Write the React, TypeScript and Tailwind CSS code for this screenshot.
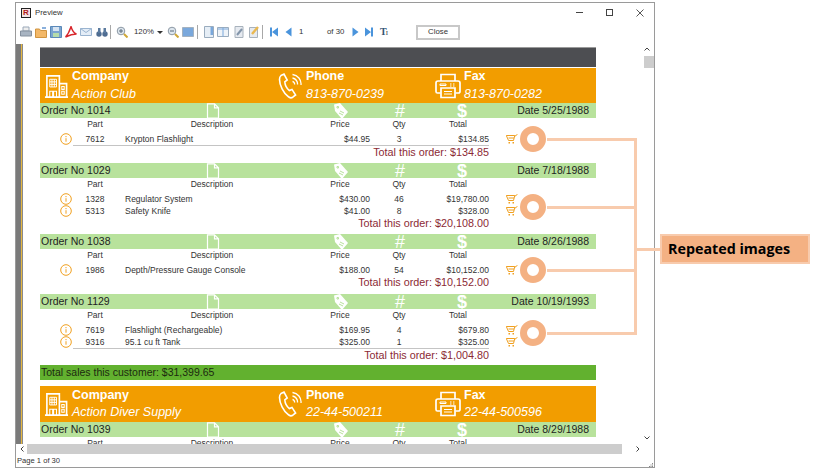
import type { ReactNode } from "react";

type Row = { part: string; desc: string; price: string; qty: string; total: string };
type Order = { no: string; date: string; rows: Row[]; sum: string; line?: boolean };

const orders: Order[] = [
  {
    no: "1014",
    date: "5/25/1988",
    sum: "$134.85",
    line: true,
    rows: [{ part: "7612", desc: "Krypton Flashlight", price: "$44.95", qty: "3", total: "$134.85" }],
  },
  {
    no: "1029",
    date: "7/18/1988",
    sum: "$20,108.00",
    rows: [
      { part: "1328", desc: "Regulator System", price: "$430.00", qty: "46", total: "$19,780.00" },
      { part: "5313", desc: "Safety Knife", price: "$41.00", qty: "8", total: "$328.00" },
    ],
  },
  {
    no: "1038",
    date: "8/26/1988",
    sum: "$10,152.00",
    rows: [{ part: "1986", desc: "Depth/Pressure Gauge Console", price: "$188.00", qty: "54", total: "$10,152.00" }],
  },
  {
    no: "1129",
    date: "10/19/1993",
    sum: "$1,004.80",
    line: true,
    rows: [
      { part: "7619", desc: "Flashlight (Rechargeable)", price: "$169.95", qty: "4", total: "$679.80" },
      { part: "9316", desc: "95.1 cu ft Tank", price: "$325.00", qty: "1", total: "$325.00" },
    ],
  },
];

function BuildingIcon() {
  return (
    <svg width="25" height="26" viewBox="0 0 26 26" fill="none" stroke="white" strokeWidth="1.7" className="shrink-0">
      <path d="M1 24.5h24M3 24.5V2.500h13v22M16 10.500h7.500v14" />
      <path d="M6 6h7v8H6zM6 8.700h7M6 11.300h7M8.300 6v8M10.700 6v8" strokeWidth="1" />
      <path d="M6 24.500v-6h3v6M10 24.500v-6h3v6M18.500 13.500h2.500v3h-2.500zM18.500 18.500h2.500v3h-2.500z" strokeWidth="1.100" />
    </svg>
  );
}

function PhoneIcon() {
  return (
    <svg width="24" height="28" viewBox="0 0 24 28" fill="none" stroke="white" strokeWidth="1.600" className="shrink-0">
      <path d="M3 3.500 6 2l3.200 6-2.400 1.800c.2 3 2.200 7 4.600 8.800l2.600-1.200 3.600 5.600-2.800 2.200c-1.600 1-3.400.6-4.800-.8C5.400 20.800 1.600 13.500 1.500 7.500 1.500 5.700 2 4.300 3 3.500Z" />
      <path d="M14.500 9.500a2.500 2.500 0 0 1 2 3M14.500 6a6 6 0 0 1 5 6.500M14.500 2.500a9.500 9.500 0 0 1 8.500 10.500" strokeWidth="1.300" />
    </svg>
  );
}

function FaxIcon() {
  return (
    <svg width="26" height="26" viewBox="0 0 26 26" fill="none" stroke="white" strokeWidth="1.700" className="shrink-0">
      <path d="M6 8V1.500h14V8M5.500 20H2.500a1.500 1.500 0 0 1-1.500-1.500V10a2 2 0 0 1 2-2h20a2 2 0 0 1 2 2v8.500a1.500 1.500 0 0 1-1.500 1.500h-3" />
      <path d="M6 15h14v9.500H6z" />
      <path d="M5 11h6v1.500H5zM15 11h1.500M18 11h1.500M15 13h1.500M18 13h1.500M9 18.500h8M9 21h8" strokeWidth="1" />
    </svg>
  );
}

function DocIcon() {
  return (
    <svg width="14" height="16" viewBox="0 0 14 16" fill="none" stroke="white" strokeWidth="1.200">
      <path d="M1.500 .8h7l4 4v10.400h-11zM8.500 .8v4h4" />
    </svg>
  );
}

function TagIcon() {
  return (
    <svg width="14" height="16" viewBox="0 0 14 16" fill="white">
      <path d="M0 1.500 6 0l8 9-6 7-7-8z" />
      <path d="M3 3.500h1.500V5H3zM6 8l4 2M5 10l4 2" stroke="#b8e29c" strokeWidth="1" />
    </svg>
  );
}

function InfoIcon() {
  return (
    <svg width="12" height="12" viewBox="0 0 12 12" fill="none" stroke="#f0a020" strokeWidth="1" className="justify-self-center">
      <circle cx="6" cy="6" r="5.300" />
      <path d="M6 5.200v3.500M6 3v1.200" />
    </svg>
  );
}

function CartIcon() {
  return (
    <svg width="12" height="11" viewBox="0 0 12 11" fill="none" stroke="#f0a020" strokeWidth="1">
      <path d="M.3 1.500h8.500L7.500 6.500H2.500zM2.500 4h5.500M8.500 2.500 11.500.3" />
      <path d="M2.500 8h1.500v1.500H2.500zM6.500 8H8v1.500H6.500z" fill="#f0a020" stroke="none" />
    </svg>
  );
}

function Cell({ title, value }: { title: string; value: string }) {
  return (
    <div className="flex flex-col leading-[17.5px]">
      <span className="text-[12.5px] font-bold">{title}</span>
      <span className="whitespace-nowrap text-[12.5px] italic">{value}</span>
    </div>
  );
}

function CompanyBar({ name, phone, fax, tall }: { name: string; phone: string; fax: string; tall?: boolean }) {
  return (
    <div className={`flex items-center bg-[#f29d00] text-white ${tall ? "h-[36px]" : "h-[35px]"}`}>
      <div className="flex w-[238px] items-center gap-[3px] pl-[4px]">
        <BuildingIcon />
        <Cell title="Company" value={name} />
      </div>
      <div className="flex w-[157px] items-center gap-[4px]">
        <PhoneIcon />
        <Cell title="Phone" value={phone} />
      </div>
      <div className="flex items-center gap-[3px]">
        <FaxIcon />
        <Cell title="Fax" value={fax} />
      </div>
    </div>
  );
}

function OrderBlock({ order }: { order: Order }) {
  return (
    <div className={order.rows.length > 1 ? "h-[71px]" : "h-[60px]"}>
      <div className="grid h-[15px] grid-cols-[165px_14px_114px_14px_45px_14px_48px_14px_1fr] items-center bg-[#b8e29c] pl-[1px] text-[10.5px] text-[#222]">
        <span>Order No {order.no}</span>
        <DocIcon />
        <span />
        <TagIcon />
        <span />
        <span className="text-center text-[18px] leading-[15px] text-white">#</span>
        <span />
        <span className="text-center text-[18px] font-bold leading-[15px] text-white">$</span>
        <span className="whitespace-nowrap pr-[7px] text-right">Date {order.date}</span>
      </div>
      <div className="grid h-[13px] grid-cols-[34px_42px_9px_174px_21px_40px_10px_58px_60px] items-center text-[8.5px] text-[#333]">
        <span />
        <span className="text-center">Part</span>
        <span />
        <span className="text-center">Description</span>
        <span />
        <span className="text-center">Price</span>
        <span />
        <span className="text-center">Qty</span>
        <span className="text-center">Total</span>
      </div>
      <div className="pt-[2px]">
        <div className={order.line ? "ml-[33px] w-[416px] border-b border-[#c4c4c4]" : "ml-[33px] w-[416px]"}>
          {order.rows.map((row) => (
            <div
              key={row.part}
              className="relative -ml-[33px] grid h-[12px] w-[449px] grid-cols-[18px_16px_42px_9px_174px_71px_58px_61px] items-center text-[8.5px] text-[#333]"
            >
              <span />
              <InfoIcon />
              <span className="text-center">{row.part}</span>
              <span />
              <span className="whitespace-nowrap">{row.desc}</span>
              <span className="text-right">{row.price}</span>
              <span className="text-center">{row.qty}</span>
              <span className="text-right">{row.total}</span>
              <div className="absolute left-[466px] top-[1px]">
                <CartIcon />
              </div>
            </div>
          ))}
        </div>
        {order.sum ? (
          <div className="h-[13px] w-[449px] text-right text-[10.8px] leading-[13px] text-[#8b2a35]">
            Total this order: {order.sum}
          </div>
        ) : null}
      </div>
    </div>
  );
}

function ToolIcon({ children, w = 12 }: { children: ReactNode; w?: number }) {
  return (
    <svg width={w} height="12" viewBox={`0 0 ${w} 12`} className="shrink-0">
      {children}
    </svg>
  );
}

function Sep() {
  return <div className="h-[14px] w-px bg-[#a8a8a8]" />;
}

function Toolbar() {
  return (
    <div className="flex h-[22px] shrink-0 items-center pb-[2px] pl-[4px] text-[7.8px] text-[#333]">
      <ToolIcon>
        <path d="M3 1h6v4H3z" fill="#eee" stroke="#9aa8b8" />
        <path d="M.5 5h11v5H.5z" fill="#a8b4c2" stroke="#84909e" />
      </ToolIcon>
      <div className="ml-[3px]">
        <ToolIcon>
          <path d="M.5 3h4l1 1.500h6v7h-11z" fill="#f3b868" stroke="#d09440" />
          <path d="M7 1h4v2H7z" fill="#8ab0dc" />
        </ToolIcon>
      </div>
      <div className="ml-[3px]">
        <ToolIcon>
          <path d="M.5.500h11v11h-11z" fill="#7aa4d0" stroke="#5a88b8" />
          <path d="M3 1h6v4H3z" fill="#d6e4f2" />
          <path d="M3 7h6v4H3z" fill="#b6dcaa" />
        </ToolIcon>
      </div>
      <div className="ml-[3px]">
        <ToolIcon>
          <path d="M6 .5c-1 3-2 7-5.500 10.500 3-1.500 7-3 11-3-3-1-4.500-4-5.500-7.500z" fill="none" stroke="#d8262c" strokeWidth="1.400" />
        </ToolIcon>
      </div>
      <div className="ml-[3px]">
        <ToolIcon>
          <path d="M.5 2.500h11v7H.5z" fill="#e4edf7" stroke="#9ab4d0" />
          <path d="M.5 2.500 6 6.500l5.500-4" fill="none" stroke="#9ab4d0" />
        </ToolIcon>
      </div>
      <div className="ml-[4px]">
        <ToolIcon>
          <circle cx="3" cy="8" r="2.700" fill="#4f6d92" />
          <circle cx="9" cy="8" r="2.700" fill="#4f6d92" />
          <path d="M2 2h2.500v5H2zM7.500 2H10v5H7.500z" fill="#5a7a9e" />
        </ToolIcon>
      </div>
      <div className="ml-[2px]">
        <Sep />
      </div>
      <div className="ml-[5px]">
        <ToolIcon>
          <circle cx="5" cy="5" r="3.800" fill="#dde6ee" stroke="#8c98a4" />
          <path d="M8 8l3.500 3.500" stroke="#d0a838" strokeWidth="2" />
          <path d="M3 5h4M5 3v4" stroke="#5a6a7a" />
        </ToolIcon>
      </div>
      <span className="ml-[6px] w-[20px]">120%</span>
      <span className="ml-[3px] h-0 w-0 border-x-[3px] border-t-[3px] border-x-transparent border-t-[#333]" />
      <div className="ml-[4px]">
        <ToolIcon>
          <circle cx="5" cy="5" r="3.800" fill="#dde6ee" stroke="#8c98a4" />
          <path d="M8 8l3.500 3.500" stroke="#d0a838" strokeWidth="2" />
          <path d="M3 5h4" stroke="#5a6a7a" />
        </ToolIcon>
      </div>
      <div className="ml-[3px]">
        <ToolIcon>
          <path d="M.5 1.500h11v9H.5z" fill="#7aa8dc" stroke="#a4b2c0" />
        </ToolIcon>
      </div>
      <div className="ml-[3px]">
        <Sep />
      </div>
      <div className="ml-[5px]">
        <ToolIcon>
          <path d="M1.500.5h9v11h-9z" fill="#e6eef6" stroke="#9aacbe" />
          <path d="M7.500 1H10v8H7.500z" fill="#7aa8dc" />
        </ToolIcon>
      </div>
      <div className="ml-[2px]">
        <ToolIcon>
          <path d="M.5 1.500h11v9H.5z" fill="#eef3f8" stroke="#9aacbe" />
          <path d="M6 1.500v9M1 3h10" stroke="#7aa8dc" />
        </ToolIcon>
      </div>
      <div className="ml-[4px]">
        <ToolIcon>
          <path d="M2 .5h8v11H2z" fill="#e6eaf0" stroke="#a8b2bc" />
          <path d="M4 9l5-6" stroke="#8496aa" strokeWidth="2" />
        </ToolIcon>
      </div>
      <div className="ml-[3px]">
        <ToolIcon>
          <path d="M1.500 1.500h8v10h-8z" fill="#e6eaf0" stroke="#a8b2bc" />
          <path d="M4 8l6-7" stroke="#eab850" strokeWidth="2.400" />
        </ToolIcon>
      </div>
      <div className="ml-[2px]">
        <Sep />
      </div>
      <div className="ml-[7px]">
        <ToolIcon w={8}>
          <path d="M0 1.500h2v9H0zM8 1.500 2 6l6 4.500z" fill="#4a94dc" />
        </ToolIcon>
      </div>
      <div className="ml-[7px]">
        <ToolIcon w={7}>
          <path d="M6.500 1.500.5 6l6 4.500z" fill="#4a94dc" />
        </ToolIcon>
      </div>
      <span className="ml-[7px] w-[28px]">1</span>
      <span className="w-[18px] whitespace-nowrap">of 30</span>
      <div className="ml-[7px]">
        <ToolIcon w={7}>
          <path d="M.5 1.500 6.500 6l-6 4.500z" fill="#4a94dc" />
        </ToolIcon>
      </div>
      <div className="ml-[6px]">
        <ToolIcon w={8}>
          <path d="M8 1.500H6v9h2zM0 1.500 6 6l-6 4.500z" fill="#4a94dc" />
        </ToolIcon>
      </div>
      <div className="ml-[7px] flex w-[9px] items-end">
        <span className="font-['Liberation_Serif',serif] text-[10px] font-bold leading-none text-[#2f5376]">T</span>
        <span className="-ml-[1px] font-['Liberation_Serif',serif] text-[7px] leading-none text-[#444]">I</span>
      </div>
      <button
        type="button"
        className="ml-[27px] h-[15px] w-[44px] border-2 border-[#c8c8c8] bg-white text-[7.8px] leading-none text-[#333]"
      >
        Close
      </button>
    </div>
  );
}

function Callouts() {
  return (
    <>
      <div className="absolute left-[520px] top-[126px] h-[26px] w-[26px] rounded-full border-[7px] border-[#f4b183] bg-white" />
      <div className="absolute left-[520px] top-[194px] h-[26px] w-[26px] rounded-full border-[7px] border-[#f4b183] bg-white" />
      <div className="absolute left-[520px] top-[257px] h-[26px] w-[26px] rounded-full border-[7px] border-[#f4b183] bg-white" />
      <div className="absolute left-[520px] top-[320px] h-[26px] w-[26px] rounded-full border-[7px] border-[#f4b183] bg-white" />
      <div className="absolute left-[547px] top-[138px] h-[3px] w-[90px] bg-[#f8cbad]" />
      <div className="absolute left-[547px] top-[206px] h-[3px] w-[90px] bg-[#f8cbad]" />
      <div className="absolute left-[547px] top-[269px] h-[3px] w-[90px] bg-[#f8cbad]" />
      <div className="absolute left-[547px] top-[332px] h-[3px] w-[90px] bg-[#f8cbad]" />
      <div className="absolute left-[634px] top-[138px] h-[197px] w-[3px] bg-[#f8cbad]" />
      <div className="absolute left-[637px] top-[248px] h-[3px] w-[24px] bg-[#f8cbad]" />
      <div className="absolute left-[660px] top-[234px] flex h-[30px] w-[150px] items-center border-2 border-[#f8cbad] bg-[#f4b183] pl-[6px] font-['Open_Sans',sans-serif] text-[14.3px] font-bold text-black">
        Repeated images
      </div>
    </>
  );
}

export default function App() {
  return (
    <div className="relative h-[471px] w-[839px] overflow-hidden bg-white font-['Liberation_Sans',Arial,sans-serif]">
      <div className="ml-[15px] mt-[2px] flex h-[466px] w-[640px] flex-col border border-[#9a9a9a] bg-white">
        <div className="flex h-[19px] shrink-0 items-center pl-[5px] pr-[10px]">
          <div className="flex h-[10px] w-[10px] items-center justify-center border border-[#222] bg-[#f4e4e4] text-[8px] font-bold leading-none text-[#b01818]">
            R
          </div>
          <span className="ml-[4px] text-[7.8px] text-[#333]">Preview</span>
          <div className="ml-auto flex items-center gap-[23px]">
            <div className="h-px w-[7px] bg-[#444]" />
            <div className="h-[7px] w-[7px] border border-[#444]" />
            <svg width="8" height="8" viewBox="0 0 8 8" stroke="#444" strokeWidth="0.900">
              <path d="M.5.5l7 7M7.500.5l-7 7" />
            </svg>
          </div>
        </div>
        <Toolbar />
        <div className="flex min-h-0 flex-1 overflow-hidden">
          <div className="w-[5px] shrink-0 bg-[#7a7a7a]" />
          <div className="w-[2px] shrink-0 border-l border-[#e6b840] bg-[#8a8a8a]" />
          <div className="w-[17px] shrink-0" />
          <div className="h-[400px] w-[556px] shrink-0 overflow-hidden pt-[3px]">
            <div className="h-[20px] border-t border-[#9a9a9a] bg-[#4d4e52]" />
            <div className="h-px" />
            <CompanyBar name="Action Club" phone="813-870-0239" fax="813-870-0282" />
            {orders.map((order) => (
              <OrderBlock key={order.no} order={order} />
            ))}
            <div className="flex h-[15px] items-center bg-[#62b12f] pl-[1px] text-[10.5px] text-[#1c2a10]">
              Total sales this customer: $31,399.65
            </div>
            <div className="h-[6px]" />
            <CompanyBar name="Action Diver Supply" phone="22-44-500211" fax="22-44-500596" tall />
            <OrderBlock order={{ no: "1039", date: "8/29/1988", sum: "", rows: [] }} />
          </div>
          <div className="flex flex-1 flex-col items-end">
            <div className="flex h-[10px] w-[14px] items-center justify-center">
              <svg width="6" height="4" viewBox="0 0 6 4" fill="none" stroke="#444">
                <path d="M.5 3.500 3 1l2.500 2.500" />
              </svg>
            </div>
            <div className="mt-[2px] h-[12px] w-[10px] bg-[#cdcdcd]" />
            <div className="mt-auto flex h-[12px] w-[14px] items-center justify-center">
              <svg width="6" height="4" viewBox="0 0 6 4" fill="none" stroke="#444">
                <path d="M.5.5 3 3l2.500-2.500" />
              </svg>
            </div>
          </div>
        </div>
        <div className="flex h-[10px] shrink-0 items-center">
          <div className="flex w-[11px] justify-center">
            <svg width="4" height="6" viewBox="0 0 4 6" fill="none" stroke="#444">
              <path d="M3.500.5 1 3l2.500 2.500" />
            </svg>
          </div>
          <div className="h-full w-[595px] bg-[#cdcdcd]" />
          <div className="ml-[14px]">
            <svg width="4" height="6" viewBox="0 0 4 6" fill="none" stroke="#444">
              <path d="M.5.500 3 3 .5 5.500" />
            </svg>
          </div>
        </div>
        <div className="flex h-[13px] shrink-0 items-center pl-[1px] pr-px text-[7.6px] text-[#333]">
          <span>Page 1 of 30</span>
          <svg width="4" height="4" viewBox="0 0 4 4" fill="#888" className="ml-auto self-end">
            <path d="M3 0h1v1H3zM1.500 1.500h1v1h-1zM3 1.500h1v1H3zM0 3h1v1H0zM1.500 3h1v1h-1zM3 3h1v1H3z" />
          </svg>
        </div>
      </div>
      <Callouts />
    </div>
  );
}
